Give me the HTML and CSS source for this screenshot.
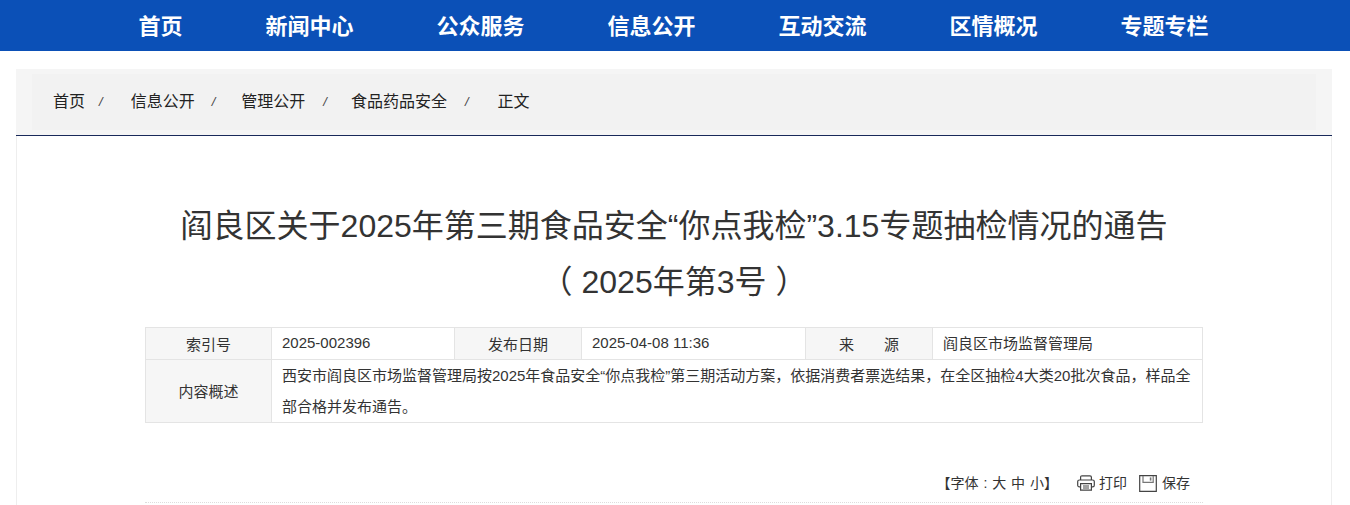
FILE: index.html
```html
<!DOCTYPE html>
<html lang="zh-CN">
<head>
<meta charset="utf-8">
<title>阎良区关于2025年第三期食品安全“你点我检”3.15专题抽检情况的通告</title>
<link rel="stylesheet" href="styles.css">
</head>
<body>
<nav class="nav">
  <a>首页</a><a>新闻中心</a><a>公众服务</a><a>信息公开</a><a>互动交流</a><a>区情概况</a><a>专题专栏</a>
</nav>
<main class="wrap">
  <div class="crumb-outer">
    <div class="crumb">
      <a class="c1">首页</a><i>/</i><a class="c2">信息公开</a><i>/</i><a class="c2">管理公开</a><i>/</i><a class="c2">食品药品安全</a><i>/</i><a class="c3">正文</a>
    </div>
  </div>
  <article class="article">
    <h1 class="title">阎良区关于2025年第三期食品安全“你点我检”3.15专题抽检情况的通告<br>（ 2025年第3号 ）</h1>
    <table class="meta">
      <colgroup><col class="w1"><col class="w2"><col class="w3"><col class="w4"><col class="w5"><col></colgroup>
      <tr class="r1">
        <th>索引号</th><td>2025-002396</td><th>发布日期</th><td>2025-04-08 11:36</td><th>来<span class="sp"></span>源</th><td>阎良区市场监督管理局</td>
      </tr>
      <tr>
        <th>内容概述</th>
        <td colspan="5" class="desc">西安市阎良区市场监督管理局按2025年食品安全“你点我检”第三期活动方案，依据消费者票选结果，在全区抽检4大类20批次食品，样品全部合格并发布通告。</td>
      </tr>
    </table>
    <div class="tools">
      <span class="fs">【字体 : 大 中 小】</span>
      <span class="tool">
        <svg width="18" height="16" viewBox="0 0 18 16" fill="none" stroke="#444" stroke-width="1.2"><path d="M3.6 5V2.2c0-.8.5-1.4 1.4-1.4h8c.9 0 1.4.6 1.4 1.4V5"/><path d="M3.6 11.8H2.4C1.3 11.8.7 11.1.7 10.2V6.6C.7 5.7 1.3 5 2.4 5h13.2c1.1 0 1.7.7 1.7 1.6v3.6c0 .9-.6 1.6-1.7 1.6h-1.2"/><path d="M3.6 8.6h10.8v6.6H3.6z"/><path d="M6 11h6M6 13h6" stroke-width="1"/></svg>打印
      </span>
      <span class="tool save">
        <svg width="18" height="17" viewBox="0 0 18 17" fill="none" stroke="#444" stroke-width="1.2"><path d="M.7.7h16.6v15.6H.7z"/><path d="M4 1v6.4h10.2V1" stroke="#777"/><path d="M11.6 2.4v3.2" stroke-width="1.6" stroke="#777"/></svg>保存
      </span>
    </div>
  </article>
</main>
</body>
</html>
```
FILE: styles.css
```css
* { box-sizing: border-box; }
html, body { margin: 0; padding: 0; height: 505px; overflow: hidden; background: #fff; }
body { font-family: "Liberation Sans", "Noto Sans CJK SC", sans-serif; color: #333; }
.nav { height: 51px; background: #0b50b7; display: flex; justify-content: center; align-items: center; gap: 83px; padding: 0 3px 3px 0; }
.nav a { color: #fff; font-size: 22px; font-weight: 700; }
.wrap { width: 1316px; margin: 18px 0 0 16px; }
.crumb-outer { background: #f5f5f5; padding: 5px 16px; height: 67px; border-bottom: 1px solid #1a2a5a; }
.crumb { height: 56px; background: #f2f2f2; display: flex; align-items: center; font-size: 16px; color: #222; padding: 0 0 4px 21px; }
.crumb i { font-style: italic; font-size: 13px; color: #444; margin-left: 14px; padding-top: 2px; }
.crumb i:nth-of-type(2) { margin-left: 17px; }
.crumb i:nth-of-type(3) { margin-left: 18px; }
.crumb i:nth-of-type(4) { margin-left: 18px; }
.crumb .c2 { margin-left: 28px; }
.crumb .c2:nth-of-type(3) { margin-left: 26px; }
.crumb .c2:nth-of-type(4) { margin-left: 24px; }
.crumb .c3 { margin-left: 29px; }
.article { height: 370px; border: 1px solid #eee; border-width: 0 1px; padding: 62px 128px 0; }
.title { margin: 0; font-size: 32px; line-height: 56px; font-weight: 400; text-align: center; color: #333; }
.meta { margin-top: 17px; width: 1058px; border-collapse: collapse; table-layout: fixed; font-size: 15px; color: #333; }
.w1 { width: 126px; } .w2 { width: 183px; } .w3 { width: 127px; } .w4 { width: 224px; } .w5 { width: 127px; }
.meta th, .meta td { border: 1px solid #e4e4e4; font-weight: 400; }
.meta th { background: #f6f6f6; text-align: center; padding-bottom: 2px; }
.meta td { padding: 0 10px 2px; }
.meta .desc { line-height: 31px; padding-bottom: 0; }
.r1 { height: 32px; }
.sp { display: inline-block; width: 30px; }
.tools { margin-top: 50px; height: 30px; width: 1058px; border-bottom: 1px dotted #ddd; display: flex; justify-content: flex-end; align-items: flex-start; font-size: 14px; color: #333; padding: 0 13px 0 0; line-height: 20px; }
.fs { margin-right: 7px; word-spacing: 1px; }
.tool { display: inline-flex; align-items: center; gap: 4px; margin-left: 12px; }
.save { gap: 5px; }
```
